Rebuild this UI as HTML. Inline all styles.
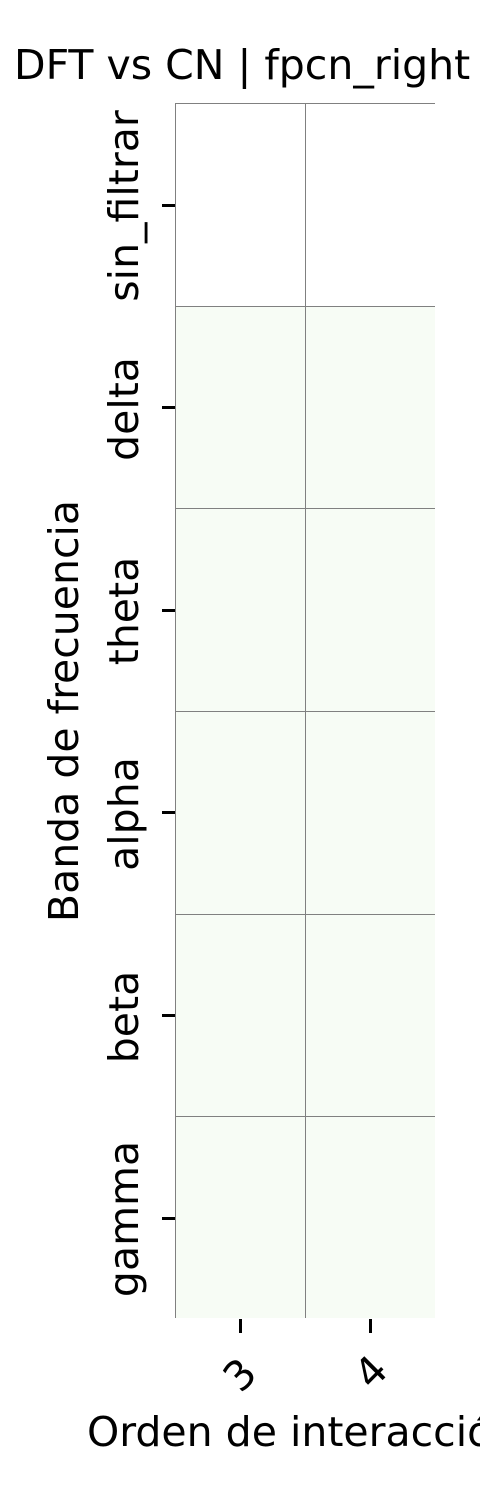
<!DOCTYPE html>
<html><head><style>
html,body{overflow:hidden}
body{margin:0;width:480px;height:1500px;background:#fff;position:relative;font-family:"DejaVu Sans","Liberation Sans",sans-serif;color:#000}
.a{position:absolute}
.cell{position:absolute;background:#f7fcf5;border-left:1px solid #808080;border-top:1px solid #808080;box-sizing:border-box}
.yl{position:absolute;font-size:41px;white-space:nowrap;transform:translate(-50%,-50%) rotate(-90deg);left:124px}
.tk{position:absolute;background:#000}
</style></head><body>
<div class="a" style="left:0;width:480px;top:38px;height:60px;overflow:hidden"><div style="position:absolute;left:14px;top:0;font-size:41px;line-height:54px;white-space:nowrap">DFT vs CN | fpcn_right</div></div>
<div class="a" style="left:175px;top:103px;width:1px;height:1215px;background:#808080"></div>
<div class="a" style="left:175px;top:103px;width:260px;height:1px;background:#808080"></div>
<div class="a" style="left:305px;top:103px;width:1px;height:1215px;background:#808080"></div>
<div class="cell" style="left:175px;top:306px;width:130px;height:203px"></div>
<div class="cell" style="left:305px;top:306px;width:130px;height:203px"></div>
<div class="cell" style="left:175px;top:508px;width:130px;height:203px"></div>
<div class="cell" style="left:305px;top:508px;width:130px;height:203px"></div>
<div class="cell" style="left:175px;top:711px;width:130px;height:203px"></div>
<div class="cell" style="left:305px;top:711px;width:130px;height:203px"></div>
<div class="cell" style="left:175px;top:914px;width:130px;height:203px"></div>
<div class="cell" style="left:305px;top:914px;width:130px;height:203px"></div>
<div class="cell" style="left:175px;top:1116px;width:130px;height:202px"></div>
<div class="cell" style="left:305px;top:1116px;width:130px;height:202px"></div>
<div class="tk" style="left:162px;top:204px;width:13px;height:3px"></div>
<div class="tk" style="left:162px;top:406px;width:13px;height:3px"></div>
<div class="tk" style="left:162px;top:609px;width:13px;height:3px"></div>
<div class="tk" style="left:162px;top:811px;width:13px;height:3px"></div>
<div class="tk" style="left:162px;top:1014px;width:13px;height:3px"></div>
<div class="tk" style="left:162px;top:1217px;width:13px;height:3px"></div>
<div class="tk" style="left:239px;top:1319px;width:3px;height:14px"></div>
<div class="tk" style="left:369px;top:1319px;width:3px;height:14px"></div>
<div class="yl" style="top:206px">sin_filtrar</div>
<div class="yl" style="top:409px">delta</div>
<div class="yl" style="top:611px">theta</div>
<div class="yl" style="top:814px">alpha</div>
<div class="yl" style="top:1017px">beta</div>
<div class="yl" style="top:1219px">gamma</div>
<div class="yl" style="left:64px;top:711px">Banda de frecuencia</div>
<div class="a" style="left:240px;top:1375px;font-size:41px;transform:translate(-50%,-50%) rotate(-45deg)">3</div>
<div class="a" style="left:371px;top:1372px;font-size:41px;transform:translate(-50%,-50%) rotate(-45deg)">4</div>
<div class="a" style="left:0;top:1406px;width:480px;height:60px;overflow:hidden"><div style="position:absolute;left:87px;top:0;font-size:41px;white-space:nowrap;line-height:52px">Orden de interacción</div></div>
</body></html>
